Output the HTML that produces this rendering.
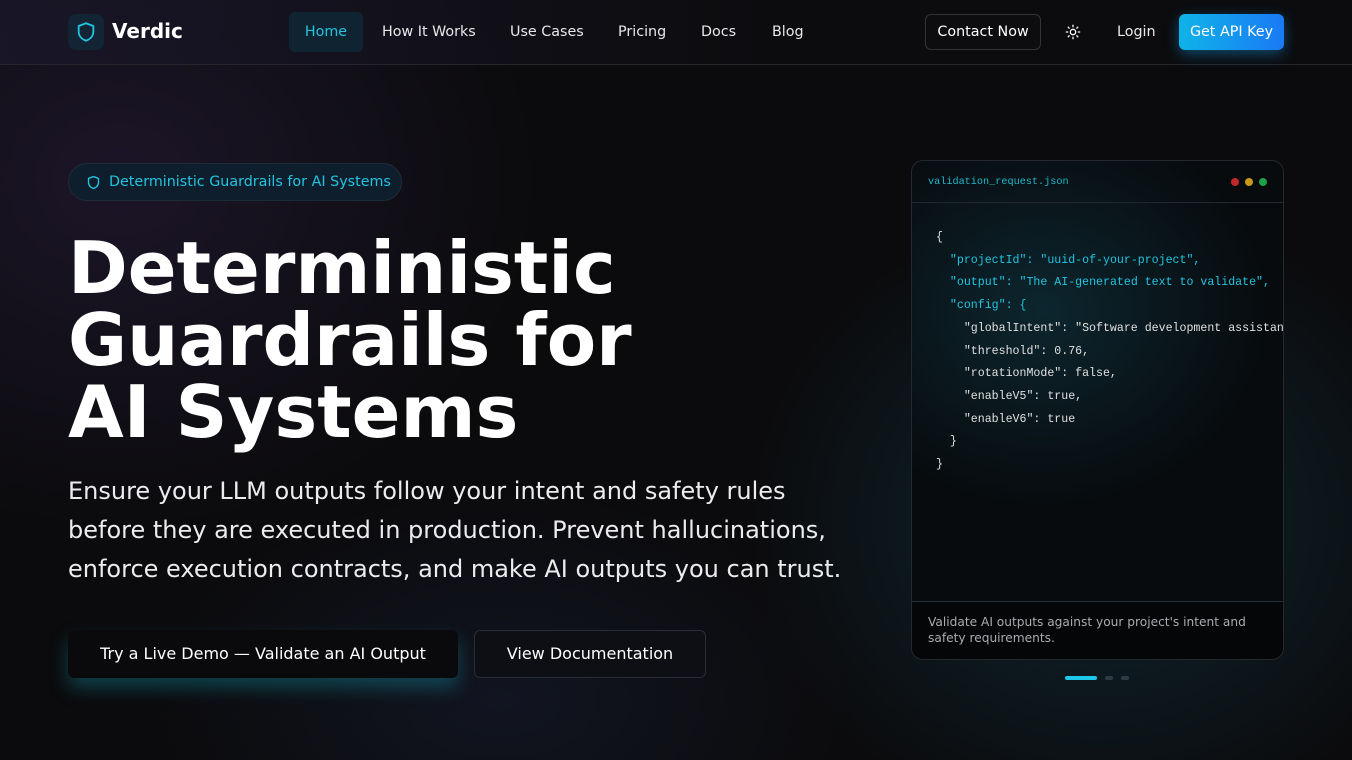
<!DOCTYPE html>
<html><head><meta charset="utf-8"><style>
*{box-sizing:border-box;margin:0;padding:0}
body{width:1352px;height:760px;overflow:hidden;font-family:"DejaVu Sans","Liberation Sans",sans-serif;color:#fff;
background:radial-gradient(ellipse 600px 500px at 120px 180px,rgba(60,40,90,.35),transparent 70%),radial-gradient(ellipse 500px 450px at 1100px 520px,rgba(20,80,100,.4),transparent 70%),radial-gradient(ellipse 500px 300px at 500px 700px,rgba(30,40,70,.35),transparent 70%),#0b0b0d;position:relative}
.nav{position:absolute;top:0;left:0;width:1352px;height:65px;border-bottom:1px solid #26262c;background:linear-gradient(90deg,rgba(25,22,40,.9),rgba(12,12,14,.6) 60%)}
.logo{position:absolute;left:68px;top:14px;width:36px;height:36px;border-radius:8px;background:#132434;display:flex;align-items:center;justify-content:center}
.brand{position:absolute;left:112px;top:19px;font-size:20px;font-weight:bold}
.nl{position:absolute;top:24px;font-size:14.3px;color:#e8e8ea}
.home{position:absolute;left:289px;top:12px;width:74px;height:40px;border-radius:6px;background:#0f2430;color:#22c4e0;font-size:14.3px;text-align:center;line-height:40px}
.contact{position:absolute;left:925px;top:14px;width:116px;height:36px;border:1px solid #333;border-radius:6px;font-size:14.3px;text-align:center;line-height:34px;background:#0d0d0f}
.api{position:absolute;left:1179px;top:14px;width:105px;height:36px;border-radius:6px;background:linear-gradient(90deg,#0fb3e8,#1a7af5);font-size:14.3px;text-align:center;line-height:36px;box-shadow:0 4px 14px rgba(20,150,230,.45)}
.badge{position:absolute;left:68px;top:163px;width:334px;height:38px;border-radius:19px;background:#0f1e2c;border:1px solid #1e2c3a;color:#22c4e0;font-size:14.3px;line-height:37px;padding-left:40px}
h1{position:absolute;left:68px;top:232px;font-size:72px;line-height:72px;font-weight:bold}
.p{position:absolute;left:68px;top:472px;font-size:24px;line-height:39px;color:#ececee;width:795px}
.b1{position:absolute;left:68px;top:630px;width:390px;height:48px;border-radius:6px;background:#0a0a0c;font-size:16px;text-align:center;line-height:48px;box-shadow:0 10px 18px rgba(20,160,180,.35)}
.b2{position:absolute;left:474px;top:630px;width:232px;height:48px;border-radius:6px;border:1px solid #2a2d36;background:#0e0f15;font-size:16px;text-align:center;line-height:46px}
.card{position:absolute;left:911px;top:160px;width:373px;height:500px;border:1px solid #25282e;border-radius:12px;overflow:hidden;background:radial-gradient(ellipse 300px 260px at 130px 150px,rgba(20,70,85,.45),transparent 75%),#070b0e}
.ch{height:42px;border-bottom:1px solid #23282e;font-family:"Liberation Mono",monospace;font-size:10.2px;color:#22b8cc;padding:16px 0 0 16px;position:relative}
.dot{position:absolute;top:17px;width:8px;height:8px;border-radius:4px}
pre{font-family:"Liberation Mono",monospace;font-size:11.6px;line-height:22.7px;color:#e0e0e0;padding:24px 0 0 24px;white-space:pre}
.k{color:#22c4e0}
.cf{position:absolute;left:0;bottom:0;width:100%;height:58px;border-top:1px solid #2a2f33;background:#050607;font-size:12.2px;color:#a9acb0;padding:12px 16px;line-height:16px}
</style></head><body>
<div class="nav">
<div class="logo"><svg width="22" height="22" viewBox="0 0 24 24" fill="none" stroke="#22c4e0" stroke-width="2" stroke-linejoin="round"><path d="M12 2.5l8 3v6c0 5-3.5 8.5-8 10-4.5-1.5-8-5-8-10v-6z"/></svg></div>
<div class="brand">Verdic</div>
<div class="home">Home</div>
<div class="nl" style="left:382px">How It Works</div>
<div class="nl" style="left:510px">Use Cases</div>
<div class="nl" style="left:618px">Pricing</div>
<div class="nl" style="left:701px">Docs</div>
<div class="nl" style="left:772px">Blog</div>
<div class="contact">Contact Now</div>
<svg style="position:absolute;left:1065px;top:24px" width="16" height="16" viewBox="0 0 24 24" fill="none" stroke="#fff" stroke-width="2" stroke-linecap="round"><circle cx="12" cy="12" r="4"/><path d="M12 2v2M12 20v2M2 12h2M20 12h2M4.9 4.9l1.4 1.4M17.7 17.7l1.4 1.4M4.9 19.1l1.4-1.4M17.7 6.3l1.4-1.4"/></svg>
<div class="nl" style="left:1117px">Login</div>
<div class="api">Get API Key</div>
</div>
<div class="badge"><svg style="position:absolute;left:17px;top:11px" width="15" height="15" viewBox="0 0 24 24" fill="none" stroke="#22c4e0" stroke-width="2.2" stroke-linejoin="round"><path d="M12 2.5l8 3v6c0 5-3.5 8.5-8 10-4.5-1.5-8-5-8-10v-6z"/></svg>Deterministic Guardrails for AI Systems</div>
<h1>Deterministic<br>Guardrails for<br>AI Systems</h1>
<div class="p">Ensure your LLM outputs follow your intent and safety rules before they are executed in production. Prevent hallucinations, enforce execution contracts, and make AI outputs you can trust.</div>
<div class="b1">Try a Live Demo — Validate an AI Output</div>
<div class="b2">View Documentation</div>
<div class="card">
<div class="ch">validation_request.json<span class="dot" style="left:319px;background:#c0282e"></span><span class="dot" style="left:333px;background:#c99a1a"></span><span class="dot" style="left:347px;background:#1fa046"></span></div>
<pre>{
  <span class="k">"projectId": "uuid-of-your-project",</span>
  <span class="k">"output": "The AI-generated text to validate",</span>
  <span class="k">"config": {</span>
    "globalIntent": "Software development assistant",
    "threshold": 0.76,
    "rotationMode": false,
    "enableV5": true,
    "enableV6": true
  }
}</pre>
<div class="cf">Validate AI outputs against your project's intent and safety requirements.</div>
</div>
<div style="position:absolute;left:1065px;top:676px;width:32px;height:4px;border-radius:2px;background:#1ec8ea"></div>
<div style="position:absolute;left:1105px;top:676px;width:8px;height:4px;border-radius:2px;background:#2c3a44"></div>
<div style="position:absolute;left:1121px;top:676px;width:8px;height:4px;border-radius:2px;background:#2c3a44"></div>
</body></html>
